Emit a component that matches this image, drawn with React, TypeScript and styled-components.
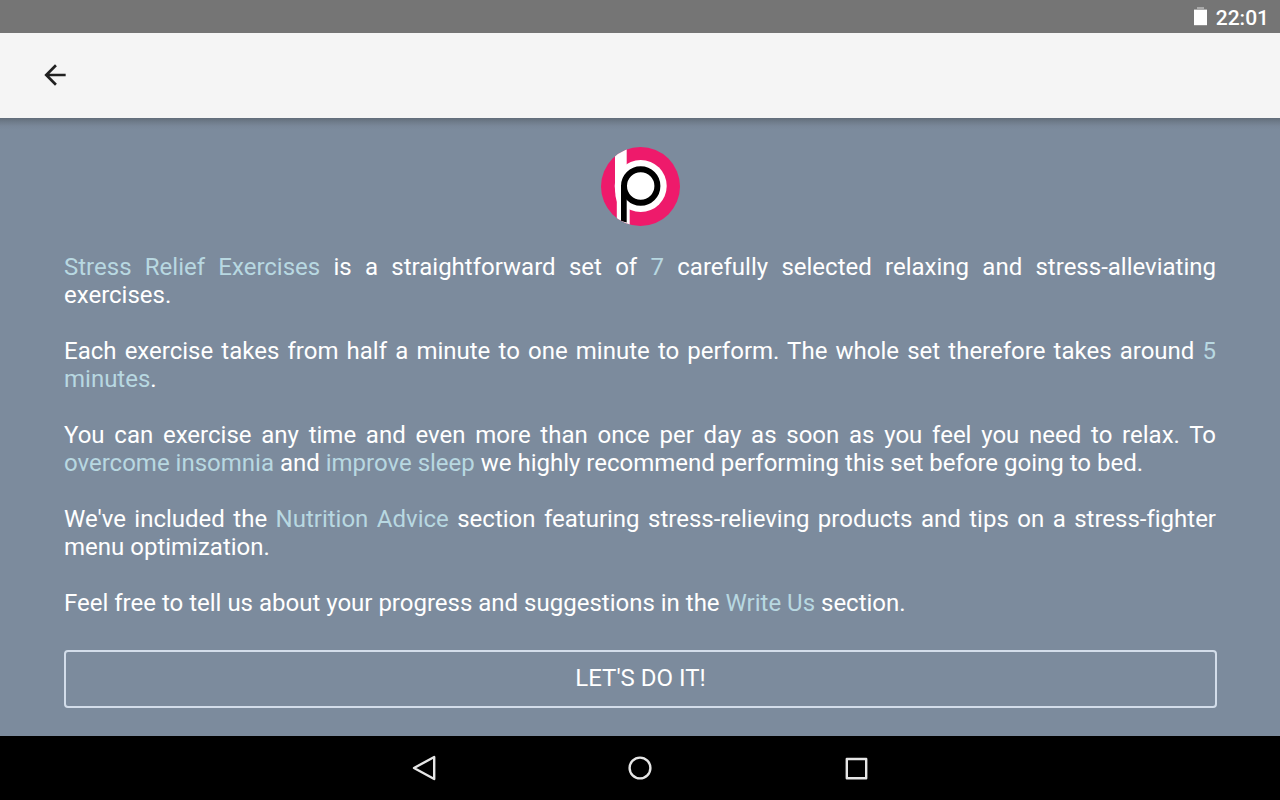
import React from 'react';
import styled, { createGlobalStyle } from 'styled-components';

const GlobalStyle = createGlobalStyle`
  body {
    margin: 0;
    background: #7c8b9d;
    font-family: Roboto, sans-serif;
  }
`;

const Screen = styled.div`
  display: flex;
  flex-direction: column;
  width: 1280px;
  height: 800px;
  overflow: hidden;
  background: #7c8b9d;
`;

const StatusBar = styled.div`
  display: flex;
  flex: none;
  align-items: center;
  justify-content: flex-end;
  box-sizing: border-box;
  height: 33px;
  padding: 4px 11px 0 0;
  background: #757575;
  color: #fff;
`;

const BatteryIcon = styled.svg`
  margin: -5px 9px 0 0;
`;

const Clock = styled.span`
  font-size: 21px;
  font-weight: 500;
  line-height: 29px;
`;

const Toolbar = styled.header`
  display: flex;
  flex: none;
  align-items: center;
  box-sizing: border-box;
  height: 85px;
  padding: 0 0 1px 39px;
  background: #f5f5f5;
`;

const BackButton = styled.button`
  display: flex;
  padding: 0;
  border: 0;
  background: none;
`;

const Content = styled.main`
  display: flex;
  flex: 1;
  flex-direction: column;
  padding: 28px 63px 0 64px;
  background: linear-gradient(#626d7a, #6f7c8b 4px, #798799 8px, #7c8b9d 12px);
`;

const Logo = styled.svg`
  align-self: center;
  flex: none;
  margin-right: 1px;
`;

const Article = styled.div`
  width: 1152px;
  margin-top: 27px;
`;

const Paragraph = styled.p`
  margin: 0 0 28px;
  color: #fff;
  font-size: 24px;
  font-variant-ligatures: none;
  line-height: 28px;
  text-align: justify;
`;

const Accent = styled.span`
  color: #b8d8e1;
`;

const StartButton = styled.button`
  flex: none;
  box-sizing: border-box;
  height: 58px;
  margin-top: 5px;
  padding: 0 0 3px;
  border: 2px solid #d3ddea;
  border-radius: 4px;
  background: none;
  color: #fff;
  font-family: inherit;
  font-size: 24px;
`;

const NavBar = styled.nav`
  display: flex;
  flex: none;
  align-items: center;
  justify-content: center;
  gap: 184px;
  height: 64px;
  background: #000;
`;

const NavIcon = styled.svg`
  fill: none;
  stroke: #e6e6e6;
  stroke-width: 2.4;
  stroke-linejoin: round;
`;

const App = () => (
  <>
    <GlobalStyle />
    <Screen>
      <StatusBar>
        <BatteryIcon width="13" height="19" viewBox="0 0 13 19">
          <path d="M3 0h7v2h3v2H0V2h3z" fill="#a9a9a9" />
          <path d="M0 3h13v15.2H0z" fill="#fff" />
        </BatteryIcon>
        <Clock>22:01</Clock>
      </StatusBar>

      <Toolbar>
        <BackButton aria-label="Back">
          <svg width="32" height="32" viewBox="0 0 24 24" fill="#212121">
            <path d="M20 11H7.83l5.59-5.59L12 4l-8 8 8 8 1.41-1.41L7.83 13H20v-2z" />
          </svg>
        </BackButton>
      </Toolbar>

      <Content>
        <Logo width="80" height="80" viewBox="0 0 80 80">
          <defs>
            <clipPath id="disc">
              <circle cx="40.5" cy="40.5" r="39.5" />
            </clipPath>
          </defs>
          <g clipPath="url(#disc)">
            <rect width="80" height="81" fill="#ee1a6b" />
            <path d="M15 0H26.7V45H29.7V81H16.8V56Q15 50 15 42z" fill="#fff" />
            <circle cx="40.7" cy="40" r="26" fill="#fff" />
            <path d="M21 40V75L26.7 76.5V40z" fill="#000" />
            <circle cx="40.7" cy="40" r="16.7" fill="#fff" stroke="#000" strokeWidth="6" />
          </g>
        </Logo>

        <Article>
          <Paragraph>
            <Accent>Stress Relief Exercises</Accent> is a straightforward set of <Accent>7</Accent>{' '}
            carefully selected relaxing and stress-alleviating exercises.
          </Paragraph>
          <Paragraph>
            Each exercise takes from half a minute to one minute to perform. The whole set therefore
            takes around <Accent>5 minutes</Accent>.
          </Paragraph>
          <Paragraph>
            You can exercise any time and even more than once per day as soon as you feel you need
            to relax. To <Accent>overcome insomnia</Accent> and <Accent>improve sleep</Accent> we
            highly recommend performing this set before going to bed.
          </Paragraph>
          <Paragraph>
            We've included the <Accent>Nutrition Advice</Accent> section featuring stress-relieving
            products and tips on a stress-fighter menu optimization.
          </Paragraph>
          <Paragraph>
            Feel free to tell us about your progress and suggestions in the{' '}
            <Accent>Write Us</Accent> section.
          </Paragraph>
        </Article>

        <StartButton>LET'S DO IT!</StartButton>
      </Content>

      <NavBar>
        <NavIcon width="32" height="32" viewBox="0 0 32 32">
          <path d="M6 16L26.2 5V27z" />
        </NavIcon>
        <NavIcon width="32" height="32" viewBox="0 0 32 32">
          <circle cx="16" cy="16" r="10.4" />
        </NavIcon>
        <NavIcon width="32" height="32" viewBox="0 0 32 32">
          <path d="M6.8 7H26.2V26.2H6.8z" />
        </NavIcon>
      </NavBar>
    </Screen>
  </>
);

export default App;
